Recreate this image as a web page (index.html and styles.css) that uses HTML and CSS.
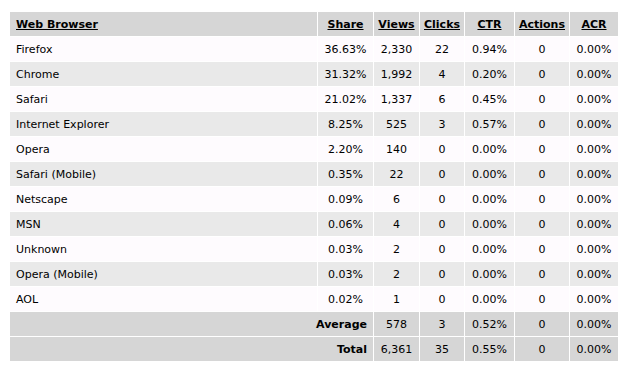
FILE: index.html
```html
<!DOCTYPE html>
<html>
<head>
<meta charset="utf-8">
<link rel="stylesheet" href="styles.css">
</head>
<body>
<table class="stats">
  <colgroup>
    <col class="c-name"><col class="c-share"><col class="c-views"><col class="c-clicks"><col class="c-ctr"><col class="c-actions"><col class="c-acr">
  </colgroup>
  <thead>
    <tr>
      <th class="name"><a href="#">Web Browser</a></th>
      <th><a href="#">Share</a></th>
      <th><a href="#">Views</a></th>
      <th><a href="#">Clicks</a></th>
      <th><a href="#">CTR</a></th>
      <th><a href="#">Actions</a></th>
      <th><a href="#">ACR</a></th>
    </tr>
  </thead>
  <tbody>
    <tr class="odd"><td class="name">Firefox</td><td>36.63%</td><td>2,330</td><td>22</td><td>0.94%</td><td>0</td><td>0.00%</td></tr>
    <tr class="even"><td class="name">Chrome</td><td>31.32%</td><td>1,992</td><td>4</td><td>0.20%</td><td>0</td><td>0.00%</td></tr>
    <tr class="odd"><td class="name">Safari</td><td>21.02%</td><td>1,337</td><td>6</td><td>0.45%</td><td>0</td><td>0.00%</td></tr>
    <tr class="even"><td class="name">Internet Explorer</td><td>8.25%</td><td>525</td><td>3</td><td>0.57%</td><td>0</td><td>0.00%</td></tr>
    <tr class="odd"><td class="name">Opera</td><td>2.20%</td><td>140</td><td>0</td><td>0.00%</td><td>0</td><td>0.00%</td></tr>
    <tr class="even"><td class="name">Safari (Mobile)</td><td>0.35%</td><td>22</td><td>0</td><td>0.00%</td><td>0</td><td>0.00%</td></tr>
    <tr class="odd"><td class="name">Netscape</td><td>0.09%</td><td>6</td><td>0</td><td>0.00%</td><td>0</td><td>0.00%</td></tr>
    <tr class="even"><td class="name">MSN</td><td>0.06%</td><td>4</td><td>0</td><td>0.00%</td><td>0</td><td>0.00%</td></tr>
    <tr class="odd"><td class="name">Unknown</td><td>0.03%</td><td>2</td><td>0</td><td>0.00%</td><td>0</td><td>0.00%</td></tr>
    <tr class="even"><td class="name">Opera (Mobile)</td><td>0.03%</td><td>2</td><td>0</td><td>0.00%</td><td>0</td><td>0.00%</td></tr>
    <tr class="odd"><td class="name">AOL</td><td>0.02%</td><td>1</td><td>0</td><td>0.00%</td><td>0</td><td>0.00%</td></tr>
  </tbody>
  <tfoot>
    <tr><th class="label" colspan="2">Average</th><td>578</td><td>3</td><td>0.52%</td><td>0</td><td>0.00%</td></tr>
    <tr><th class="label" colspan="2">Total</th><td>6,361</td><td>35</td><td>0.55%</td><td>0</td><td>0.00%</td></tr>
  </tfoot>
</table>
</body>
</html>
```
FILE: styles.css
```css
html, body {
  background: #ffffff;
}
body {
  margin: 11px 9px;
  font-family: "DejaVu Sans", Verdana, sans-serif;
  font-size: 11px;
  color: #000000;
}
.stats {
  border-collapse: separate;
  border-spacing: 1px;
  table-layout: fixed;
  width: 610px;
}
.c-name { width: 307px; }
.c-share { width: 55px; }
.c-views { width: 45px; }
.c-clicks { width: 44px; }
.c-ctr { width: 49px; }
.c-actions { width: 54px; }
.c-acr { width: 48px; }

.stats th,
.stats td {
  height: 24px;
  padding: 0;
  text-align: center;
  vertical-align: middle;
  white-space: nowrap;
  box-sizing: border-box;
}
.stats thead th {
  background: #d6d6d6;
  font-weight: bold;
}
.stats thead a {
  color: #000000;
  text-decoration: underline;
}
.stats .name {
  text-align: left;
  padding-left: 6px;
}
.stats tr.odd td {
  background: #fefbfe;
}
.stats tr.even td {
  background: #e9e9e9;
}
.stats tfoot th,
.stats tfoot td {
  background: #d6d6d6;
}
.stats tfoot .label {
  text-align: right;
  padding-right: 6px;
  font-weight: bold;
}
```
